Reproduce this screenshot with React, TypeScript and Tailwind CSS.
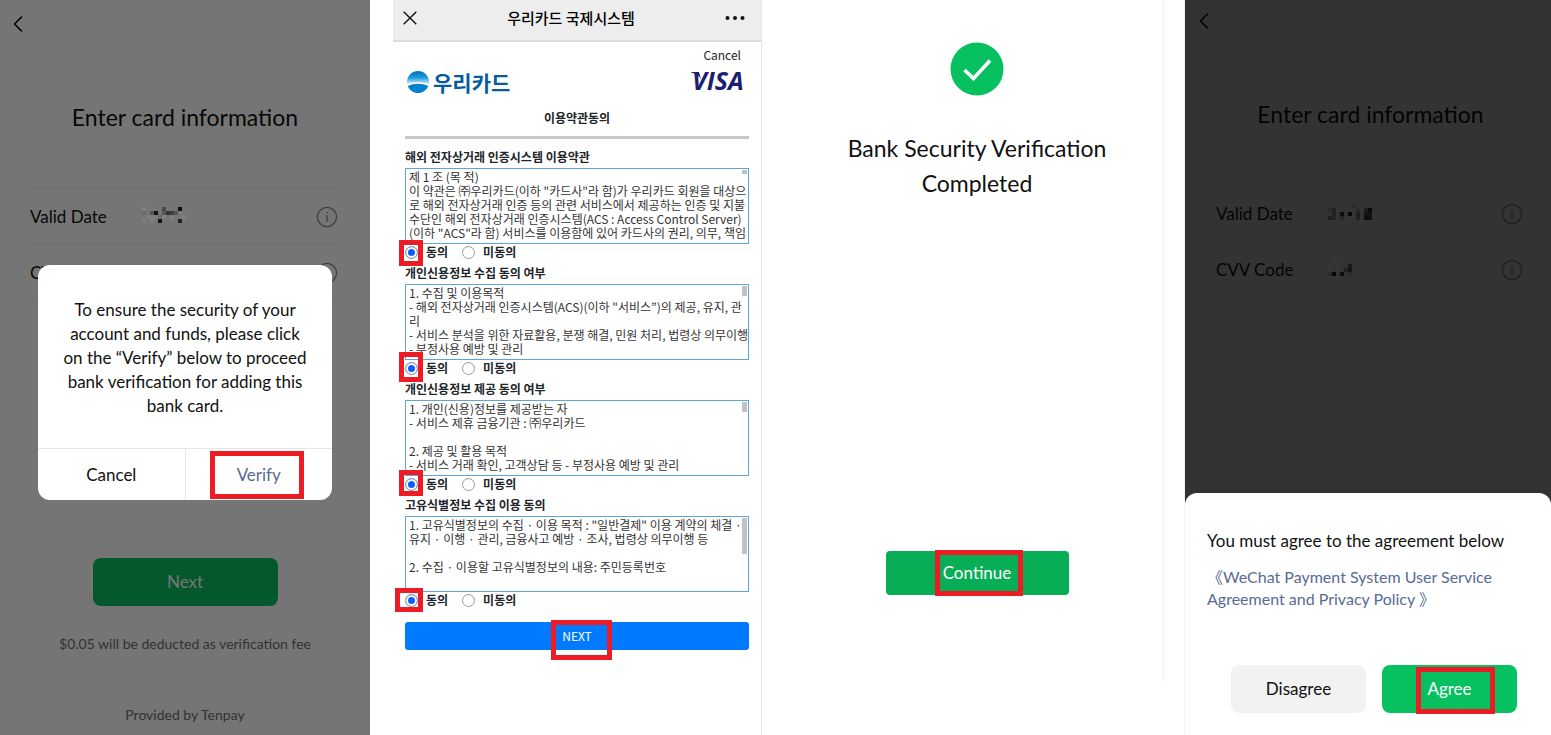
import { useState } from 'react';

type Cell = [number, number, string];

interface CardRow {
  label: string;
  cells: Cell[];
}

interface Term {
  id: string;
  title: string;
  text: string;
  thumb: string;
  mark: string;
}

const markStyle = 'pointer-events-none absolute border-[5px] border-[#ed1c24]';

const radioStyle =
  'size-[13px] appearance-none rounded-full border border-[#9a9a9a] bg-white checked:bg-[#0b5fff] checked:shadow-[inset_0_0_0_2px_#fff]';

const verifyRows: CardRow[] = [
  {
    label: 'Valid Date',
    cells: [
      [0, 0, '#808080'], [5, 0, '#4a4a4a'], [9, 0, '#111111'],
      [0, 1, '#6c6c6c'], [2, 1, '#585858'], [3, 1, '#141414'], [5, 1, '#565656'],
      [6, 1, '#333333'], [7, 1, '#3e3e3e'], [8, 1, '#555555'], [9, 1, '#7e7e7e'],
      [1, 2, '#7e7e7e'], [2, 2, '#808080'], [3, 2, '#7c7c7c'], [4, 2, '#6c6c6c'],
      [5, 2, '#808080'], [7, 2, '#808080'], [10, 2, '#7e7e7e'],
      [0, 3, '#7e7e7e'], [2, 3, '#808080'], [4, 3, '#141414'], [9, 3, '#222222'],
    ],
  },
  { label: 'CVV Code', cells: [] },
];

const agreeRows: CardRow[] = [
  {
    label: 'Valid Date',
    cells: [
      [6, 0, '#2a2a2a'],
      [0, 1, '#2a2a2a'], [1, 1, '#212121'], [7, 1, '#2c2c2c'], [9, 1, '#1e1e1e'], [10, 1, '#0a0a0a'],
      [1, 2, '#212121'], [3, 2, '#0c0c0c'], [5, 2, '#070707'], [7, 2, '#1e1e1e'], [9, 2, '#141414'], [10, 2, '#141414'],
      [0, 3, '#1d1d1d'], [1, 3, '#242424'], [3, 3, '#272727'], [5, 3, '#363636'], [7, 3, '#222222'],
      [9, 3, '#0b0b0b'], [10, 3, '#0f0f0f'],
    ],
  },
  {
    label: 'CVV Code',
    cells: [
      [1, 0, '#373737'], [3, 0, '#363636'],
      [0, 1, '#363636'], [2, 1, '#373737'], [5, 1, '#191919'],
      [0, 2, '#373737'], [4, 2, '#202020'], [5, 2, '#161616'],
      [0, 3, '#2a2a2a'], [1, 3, '#080808'], [3, 3, '#0b0b0b'], [5, 3, '#2a2a2a'],
    ],
  },
];

const terms: Term[] = [
  {
    id: 'service',
    title: '해외 전자상거래 인증시스템 이용약관',
    text: `제 1 조 (목 적)
이 약관은 ㈜우리카드(이하 "카드사"라 함)가 우리카드 회원을 대상으
로 해외 전자상거래 인증 등의 관련 서비스에서 제공하는 인증 및 지불
수단인 해외 전자상거래 인증시스템(ACS : Access Control Server)
(이하 "ACS"라 함) 서비스를 이용함에 있어 카드사의 권리, 의무, 책임`,
    thumb: 'h-1',
    mark: '-left-1.5 -top-1.5 h-[26px] w-6',
  },
  {
    id: 'collect',
    title: '개인신용정보 수집 동의 여부',
    text: `1. 수집 및 이용목적
- 해외 전자상거래 인증시스템(ACS)(이하 "서비스”)의 제공, 유지, 관
리
- 서비스 분석을 위한 자료활용, 분쟁 해결, 민원 처리, 법령상 의무이행
- 부정사용 예방 및 관리`,
    thumb: 'h-2.5',
    mark: '-left-1.5 -top-2.5 h-[30px] w-6',
  },
  {
    id: 'provide',
    title: '개인신용정보 제공 동의 여부',
    text: `1. 개인(신용)정보를 제공받는 자
- 서비스 제휴 금융기관 : ㈜우리카드

2. 제공 및 활용 목적
- 서비스 거래 확인, 고객상담 등 - 부정사용 예방 및 관리`,
    thumb: 'h-2.5',
    mark: '-left-1.5 -top-2 h-[26px] w-6',
  },
  {
    id: 'identity',
    title: '고유식별정보 수집 이용 동의',
    text: `1. 고유식별정보의 수집 · 이용 목적 : "일반결제" 이용 계약의 체결 ·
유지 · 이행 · 관리, 금융사고 예방 · 조사, 법령상 의무이행 등

2. 수집 · 이용할 고유식별정보의 내용: 주민등록번호`,
    thumb: 'h-9',
    mark: '-left-2.5 -top-1.5 h-6 w-7',
  },
];

const InfoIcon = () => (
  <svg viewBox="0 0 22 22" className="size-[22px]" fill="none" stroke="#8c8c8c" strokeWidth="1.3">
    <circle cx="11" cy="11" r="9.6" />
    <path d="M11 9.2v6.6" />
    <path d="M11 6v1.6" />
  </svg>
);

const Mosaic = ({ cells }: { cells: Cell[] }) => (
  <svg viewBox="0 0 44 16" className="relative z-10 mb-1 h-4 w-11" shapeRendering="crispEdges">
    {cells.map(([x, y, fill]) => (
      <rect key={`${x}-${y}`} x={x * 4} y={y * 4} width="4" height="4" fill={fill} />
    ))}
  </svg>
);

const CardForm = ({ rows }: { rows: CardRow[] }) => (
  <>
    <header className="flex h-[42px] items-center px-3">
      <button aria-label="Back">
        <svg viewBox="0 0 12 18" className="h-[18px] w-3" fill="none" stroke="#000" strokeWidth="1.5">
          <path d="M10 1.5 2.5 9l7.5 7.5" />
        </svg>
      </button>
    </header>
    <h1 className="mt-[58px] text-center text-[23px] leading-7">Enter card information</h1>
    <ul className="mx-[30px] mt-[57px] border-b border-[#ebebeb]">
      {rows.map((row) => (
        <li key={row.label} className="flex h-14 items-center border-t border-[#ebebeb] pr-0.5">
          <span className="w-28 text-[17px]">{row.label}</span>
          <Mosaic cells={row.cells} />
          <button aria-label={`About ${row.label}`} className="ml-auto">
            <InfoIcon />
          </button>
        </li>
      ))}
    </ul>
  </>
);

const VerifyScreen = () => (
  <section className="relative flex min-h-screen flex-col bg-white pt-[3px]">
    <CardForm rows={verifyRows} />
    <button className="mx-auto mt-[257px] h-12 w-1/2 rounded-lg bg-[#07c160] text-[17px] text-white">Next</button>
    <p className="mt-7 text-center text-sm leading-5 text-[#707070]">
      $0.05 will be deducted as verification fee
    </p>
    <p className="mb-2.5 mt-auto text-center text-sm leading-5 text-[#707070]">Provided by Tenpay</p>

    <div className="absolute inset-0 flex items-center bg-black/54 px-[38px] pt-[30px]">
      <div role="dialog" aria-label="Bank verification" className="w-full overflow-hidden rounded-xl bg-white">
        <p className="px-5 pb-[30px] pt-[33px] text-center text-[17px] leading-6">
          To ensure the security of your
          <br />
          account and funds, please click
          <br />
          on the “Verify” below to proceed
          <br />
          bank verification for adding this
          <br />
          bank card.
        </p>
        <div className="flex h-[52px] border-t border-[#e5e5e5] text-[17px]">
          <button className="flex-1 border-r border-[#e5e5e5]">Cancel</button>
          <button className="relative flex-1 text-[#576b95]">
            Verify
            <span className={`${markStyle} left-6 top-0.5 h-12 w-[94px]`} />
          </button>
        </div>
      </div>
    </div>
  </section>
);

const WooriLogo = () => (
  <div className="flex items-center gap-1">
    <svg viewBox="0 0 22 22" className="size-[22px]">
      <defs>
        <linearGradient id="sky" x1="0" y1="0" x2="0" y2="1">
          <stop offset="0" stopColor="#0072bc" />
          <stop offset="0.3" stopColor="#1c9bdc" />
          <stop offset="0.6" stopColor="#d8f1fc" />
        </linearGradient>
      </defs>
      <circle cx="11" cy="11" r="11" fill="url(#sky)" />
      <path d="M0 13.5C5 10.500 17 10.500 22 13.500L20.500 16.500C15 13 7 13 1.500 16.500Z" fill="#fff" />
      <path d="M0.800 15C7 12 15 12 21.200 15C19.600 19.300 15.600 22 11 22C6.400 22 2.400 19.300 0.800 15Z" fill="#0083cb" />
    </svg>
    <span className="text-[21px] font-bold leading-6 text-[#075b9f]">우리카드</span>
  </div>
);

const VisaLogo = () => (
  <svg viewBox="0 0 60 36" className="h-9 w-[60px]" fill="#1a1f71" role="img" aria-label="VISA">
    <path d="M2 8h8l2 7C10 11.500 6 9 2 8.500Z" />
    <text x="3" y="26" fontFamily="Open Sans" fontSize="25" fontStyle="italic" fontWeight="700">
      VISA
    </text>
  </svg>
);

const TermSection = ({ term }: { term: Term }) => {
  const [agreed, setAgreed] = useState(true);

  return (
    <div className="pb-0.5">
      <label htmlFor={term.id} className="block h-[22px] text-xs font-bold leading-[22px]">
        {term.title}
      </label>
      <div className="relative h-[76px]">
        <textarea
          id={term.id}
          readOnly
          value={term.text}
          className="block size-full resize-none overflow-hidden whitespace-pre border border-[#5fa5dc] px-[3px] py-px text-xs leading-[14px] text-[#333]"
        />
        <span className={`absolute right-0.5 top-0.5 w-[5px] bg-[#c1c1c1] ${term.thumb}`} />
      </div>
      <div className="flex h-4 items-center text-xs font-bold">
        <span className="relative mr-2 flex">
          <input
            type="radio"
            id={`${term.id}-yes`}
            name={`${term.id}-choice`}
            checked={agreed}
            onChange={() => setAgreed(true)}
            className={radioStyle}
          />
          <span className={`${markStyle} ${term.mark}`} />
        </span>
        <label htmlFor={`${term.id}-yes`}>동의</label>
        <input
          type="radio"
          id={`${term.id}-no`}
          name={`${term.id}-choice`}
          checked={!agreed}
          onChange={() => setAgreed(false)}
          className={`ml-3.5 mr-2 ${radioStyle}`}
        />
        <label htmlFor={`${term.id}-no`}>미동의</label>
      </div>
    </div>
  );
};

const TermsScreen = () => (
  <section className="min-h-screen border-r border-[#e5e5e5] bg-white font-['Noto_Sans_CJK_KR',sans-serif] text-[#212529]">
    <header className="flex h-[42px] items-center justify-between border-b-2 border-[#dcdcdc] bg-[#ededed] pb-1 pl-2.5 pr-4">
      <button aria-label="Close">
        <svg viewBox="0 0 14 14" className="size-3.5" fill="none" stroke="#111" strokeWidth="1.4">
          <path d="m.7.7 12.600 12.600M13.300.7.7 13.300" />
        </svg>
      </button>
      <h2 className="text-[15px] font-medium text-black">우리카드 국제시스템</h2>
      <button aria-label="More">
        <svg viewBox="0 0 20 4" className="h-1 w-5" fill="#111">
          <circle cx="2.500" cy="2" r="2" />
          <circle cx="10" cy="2" r="2" />
          <circle cx="17.500" cy="2" r="2" />
        </svg>
      </button>
    </header>
    <div className="px-3">
      <div className="flex justify-end pr-2 pt-1">
        <a href="#" className="text-xs leading-[18px]">Cancel</a>
      </div>
      <div className="flex h-9 items-center justify-between pl-0.5">
        <WooriLogo />
        <VisaLogo />
      </div>
      <h3 className="border-b-[3px] border-[#c6c6c6] pb-2 pt-2 text-center text-xs font-bold leading-5">
        이용약관동의
      </h3>
      <form className="pt-[7px]" onSubmit={(e) => e.preventDefault()}>
        {terms.map((term) => (
          <TermSection key={term.id} term={term} />
        ))}
        <button className="relative mt-3 block h-7 w-full rounded-[3px] bg-[#007bff] text-xs text-white">
          NEXT
          <span className={`${markStyle} -top-0.5 left-[146px] h-10 w-[61px]`} />
        </button>
      </form>
    </div>
  </section>
);

const CompletedScreen = () => (
  <section className="flex h-[683px] flex-col items-center border-r border-[#f3f3f3] pt-[42px]">
    <svg viewBox="0 0 54 54" className="size-[54px]">
      <circle cx="27" cy="27" r="26.500" fill="#07c160" />
      <path d="m14.500 28 9 8.500L40 18.500" fill="none" stroke="#fff" strokeWidth="3.600" />
    </svg>
    <h2 className="mt-[35px] text-center text-[23px] leading-[35px]">
      Bank Security Verification
      <br />
      Completed
    </h2>
    <button className="relative mt-[350px] h-11 w-[183px] rounded bg-[#08ae56] text-[17px] text-white">
      Continue
      <span className={`${markStyle} -top-px left-[49px] h-[46px] w-[88px]`} />
    </button>
  </section>
);

const AgreementScreen = () => (
  <section className="relative min-h-screen overflow-hidden border-l border-[#f3f3f3] bg-white">
    <div className="-mr-1 pl-px">
      <CardForm rows={agreeRows} />
    </div>
    <div className="absolute inset-0 flex items-end bg-black/80">
      <div role="dialog" aria-label="Agreement" className="w-full rounded-t-xl bg-white px-[22px] pb-[22px] pt-9">
        <p className="text-[17px] leading-6">You must agree to the agreement below</p>
        <a href="#" className="mt-[13px] block text-base leading-[22px] text-[#576b95]">
          《WeChat Payment System User Service
          <br />
          Agreement and Privacy Policy 》
        </a>
        <div className="mt-[55px] flex gap-4 pl-6 pr-3 text-[17px]">
          <button className="h-12 flex-1 rounded-lg bg-[#f2f2f2]">Disagree</button>
          <button className="relative h-12 flex-1 rounded-lg bg-[#07c160] text-white">
            Agree
            <span className={`${markStyle} left-[34px] top-0.5 h-[47px] w-[79px]`} />
          </button>
        </div>
      </div>
    </div>
  </section>
);

const App = () => {
  return (
    <main className="grid min-h-screen grid-cols-[370fr_392fr_402fr_387fr] bg-white font-[Lato,'Noto_Sans_CJK_KR',sans-serif] text-[#111]">
      <VerifyScreen />
      <div className="pl-[23px]">
        <TermsScreen />
      </div>
      <div className="pl-[29px]">
        <CompletedScreen />
      </div>
      <div className="pl-5">
        <AgreementScreen />
      </div>
    </main>
  );
};

export default App;
